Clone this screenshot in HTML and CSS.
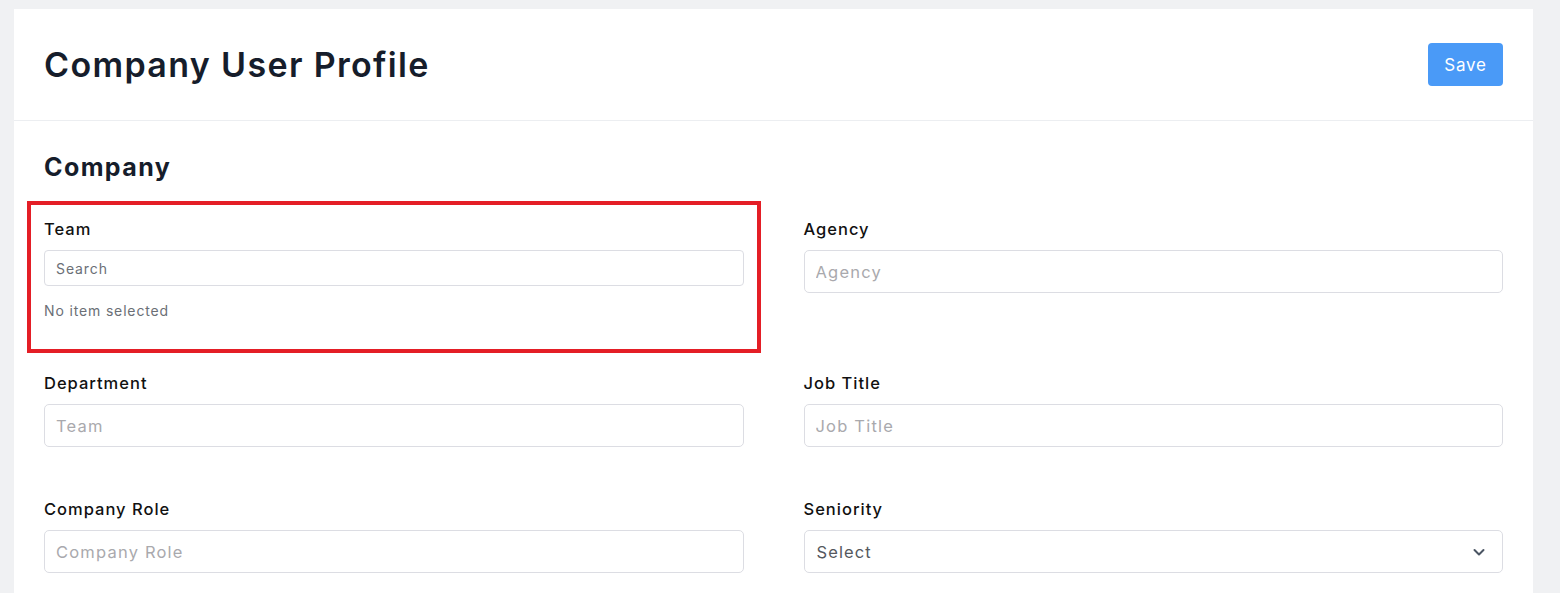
FILE: index.html
```html
<!DOCTYPE html>
<html lang="en">
<head>
<meta charset="utf-8">
<title>Company User Profile</title>
<link rel="stylesheet" href="styles.css">
</head>
<body>
<div class="page">
  <div class="card">
    <header class="card-header">
      <h1 class="title">Company User Profile</h1>
      <button class="btn-save" type="button">Save</button>
    </header>
    <section class="card-body">
      <h2 class="section-title">Company</h2>
      <div class="grid">
        <div class="field field-team">
          <label class="label">Team</label>
          <input class="input input-sm" type="text" placeholder="Search">
          <p class="hint">No item selected</p>
          <div class="highlight"></div>
        </div>
        <div class="field">
          <label class="label">Agency</label>
          <input class="input" type="text" placeholder="Agency">
        </div>
        <div class="field">
          <label class="label">Department</label>
          <input class="input" type="text" placeholder="Team">
        </div>
        <div class="field">
          <label class="label">Job Title</label>
          <input class="input" type="text" placeholder="Job Title">
        </div>
        <div class="field">
          <label class="label">Company Role</label>
          <input class="input" type="text" placeholder="Company Role">
        </div>
        <div class="field">
          <label class="label">Seniority</label>
          <div class="select">
            <span class="select-value">Select</span>
            <svg class="chevron" width="14" height="14" viewBox="0 0 14 14" fill="none"><path d="M2.5 5l4.5 4.5L11.5 5" stroke="#4b5563" stroke-width="2" stroke-linecap="round" stroke-linejoin="round"/></svg>
          </div>
        </div>
      </div>
    </section>
  </div>
</div>
</body>
</html>
```

FILE: styles.css
```css
* { box-sizing: border-box; }
html, body { margin: 0; padding: 0; }
body {
  background: #f0f1f3;
  font-family: Inter, "Open Sans", sans-serif;
  color: #111827;
  overflow: hidden;
}
.page {
  padding: 9px 27px 0 14px;
}
.card {
  background: #fff;
  min-height: 600px;
}
.card-header {
  display: flex;
  align-items: center;
  justify-content: space-between;
  padding: 34px 30px;
  border-bottom: 1px solid #eceef1;
}
.title {
  margin: 0;
  font-size: 34px;
  font-weight: 600;
  line-height: 43px;
  color: #161d2b;
  letter-spacing: 1.35px;
}
.btn-save {
  width: 75px;
  height: 43px;
  border: none;
  border-radius: 4px;
  background: #4a9af7;
  color: #fff;
  font-family: inherit;
  font-size: 17px;
  font-weight: 400;
  letter-spacing: 0.8px;
  padding: 0;
}
.card-body {
  padding: 30px 30px 0;
}
.section-title {
  margin: 0;
  font-size: 25px;
  line-height: 32px;
  font-weight: 700;
  color: #161d2b;
  letter-spacing: 1.4px;
}
.grid {
  display: grid;
  grid-template-columns: 1fr 1fr;
  column-gap: 60px;
  row-gap: 50px;
  margin-top: 34px;
}
.field {
  display: flex;
  flex-direction: column;
  gap: 9px;
  position: relative;
}
.label {
  font-size: 16.5px;
  line-height: 24px;
  font-weight: 450;
  color: #111;
  letter-spacing: 1px;
}
.input {
  height: 43px;
  border: 1px solid #dcdde3;
  border-radius: 5px;
  padding: 0 11px;
  font-family: inherit;
  font-size: 16.5px;
  color: #111;
  background: #fff;
  outline: none;
  letter-spacing: 1.2px;
}
.input::placeholder { color: #a9a9ad; }
.input-sm {
  height: 36px;
  font-size: 14px;
  border-radius: 4px;
  letter-spacing: 0.9px;
}
.input-sm::placeholder { color: #6b6f76; }
.hint {
  margin: 5px 0 0;
  font-size: 14px;
  line-height: 21px;
  color: #6b6f76;
  letter-spacing: 0.85px;
}
.highlight {
  position: absolute;
  top: -16px;
  left: -17px;
  right: -17px;
  bottom: -32px;
  border: 4px solid #e41e26;
  pointer-events: none;
}
.select {
  height: 43px;
  border: 1px solid #dcdde3;
  border-radius: 5px;
  padding: 0 16px 0 12px;
  display: flex;
  align-items: center;
  justify-content: space-between;
}
.select-value {
  font-size: 16.5px;
  color: #55585e;
  letter-spacing: 1.1px;
}
```
